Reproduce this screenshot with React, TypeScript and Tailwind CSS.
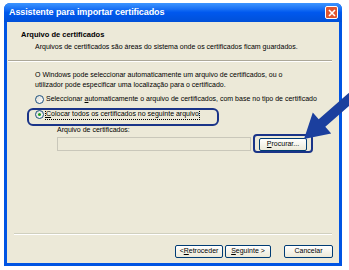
const ui = { fontFamily: '"Liberation Sans", Arial, sans-serif' };

function Radio({ checked }: { checked?: boolean }) {
  return (
    <span className="w-[9px] h-[9px] rounded-full border border-[#1c5180] bg-gradient-to-br from-[#dcdcd4] to-white flex items-center justify-center shrink-0">
      {checked && <span className="w-[3px] h-[3px] rounded-full bg-[#21a121]" />}
    </span>
  );
}

function XpButton({ children, w = "w-[48px]" }: { children: React.ReactNode; w?: string }) {
  return (
    <div
      className={`${w} h-[13px] rounded-[2px] border border-[#003c74] bg-gradient-to-b from-white to-[#ece9d8] flex items-center justify-center text-[7px] text-black`}
    >
      {children}
    </div>
  );
}

export default function App() {
  return (
    <div className="w-[349px] h-[270px] bg-white relative overflow-hidden" style={ui}>
      <div className="ml-[4px] mt-[3px] w-[338px] h-[263px] flex flex-col rounded-t-[6px] overflow-hidden bg-[#0054e3]">
        {/* title bar */}
        <div className="h-[19px] shrink-0 flex items-center justify-between pl-[5px] pr-[4px] bg-gradient-to-b from-[#3d95ff] via-[#0058ee] to-[#0050d8]">
          <span className="text-white font-bold text-[9px] tracking-[-0.1px]">Assistente para importar certificados</span>
          <span className="w-[13px] h-[13px] rounded-[2px] border border-white bg-[#e0552f] flex items-center justify-center">
            <svg width="8" height="8" viewBox="0 0 8 8">
              <path d="M1 1L7 7M7 1L1 7" stroke="white" strokeWidth="1.6" />
            </svg>
          </span>
        </div>
        {/* body */}
        <div className="flex-1 mx-[3px] mb-[3px] bg-[#ece9d8] flex flex-col">
          <div className="pl-[14px] pt-[8px] h-[38px]">
            <div className="font-bold text-[7.5px] leading-[10px]">Arquivo de certificados</div>
            <div className="pl-[14px] mt-[2px] text-[7px] leading-[10px]">
              Arquivos de certificados são áreas do sistema onde os certificados ficam guardados.
            </div>
          </div>
          <div className="mx-[1px] h-[2px] border-t border-[#aca899] border-b border-b-white w-[324px]" />
          <div className="pl-[28px] pt-[8px] text-[7px] leading-[10px]">
            <div>O Windows pode seleccionar automaticamente um arquivo de certificados, ou o</div>
            <div>utilizador pode especificar uma localização para o certificado.</div>
            <div className="flex items-center gap-[2px] mt-[4px] h-[10px]">
              <Radio />
              <span>
                Seleccionar <span className="underline">a</span>utomaticamente o arquivo de certificados, com base no tipo de certificado
              </span>
            </div>
            <div className="flex items-center gap-[2px] mt-[5px] h-[10px]">
              <Radio checked />
              <span className="outline outline-1 outline-dotted outline-black">
                <span className="underline">C</span>olocar todos os certificados no seguinte arquivo
              </span>
            </div>
            <div className="pl-[22px] mt-[6px]">Arquivo de certificados:</div>
            <div className="pl-[22px] mt-[2px] flex items-center gap-[8px]">
              <div className="w-[194px] h-[14px] border border-[#c9c7ba] bg-[#ece9d8]" />
              <XpButton>
                <span className="underline">P</span>rocurar...
              </XpButton>
            </div>
          </div>
          <div className="flex-1" />
          <div className="ml-[7px] w-[318px] h-[2px] border-t border-[#d0d0bf] border-b border-b-white" />
          <div className="flex justify-end items-center pr-[6px] pt-[10px] pb-[5px] gap-[2px]">
            <XpButton>
              &lt; <span className="underline">R</span>etroceder
            </XpButton>
            <XpButton w="w-[46px]">
              <span className="underline">S</span>eguinte &gt;
            </XpButton>
            <div className="w-[9px]" />
            <XpButton w="w-[49px]">Cancelar</XpButton>
          </div>
        </div>
      </div>
      {/* highlight overlays */}
      <div className="absolute left-[27px] top-[108px] w-[192px] h-[18px] rounded-[6px] border-2 border-[#1a3488]" />
      <div className="absolute left-[253px] top-[134px] w-[60px] h-[19px] rounded-[4px] border-2 border-[#1a3488]" />
      <svg className="absolute left-0 top-0" width="349" height="270" viewBox="0 0 349 270">
        <polygon
          points="304,139 312.8,112.5 318.7,119.3 348.7,92.9 355.3,100.4 325.3,126.8 331.2,133.5"
          fill="#1b3f9e"
        />
      </svg>
    </div>
  );
}
